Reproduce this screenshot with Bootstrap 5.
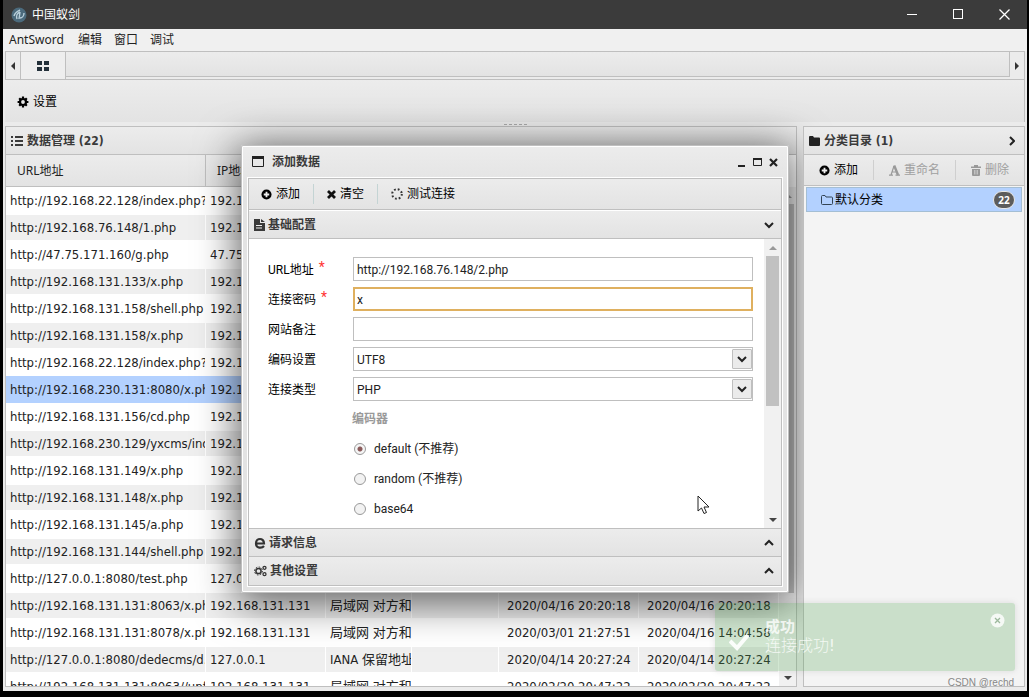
<!DOCTYPE html>
<html lang="zh-CN">
<head>
<meta charset="utf-8">
<meta name="viewport" content="width=device-width, initial-scale=1">
<title>中国蚁剑</title>
<link href="https://cdn.jsdelivr.net/npm/bootstrap@5.3.0/dist/css/bootstrap.min.css" rel="stylesheet">
<style>
:root{--line:#bfbfbf;--face:linear-gradient(#ececec,#e3e3e3)}
body{background:#000;font:12px/16px "DejaVu Sans Condensed","Noto Sans CJK SC",sans-serif;color:#000}
button,input,select{font:inherit;color:inherit}
button{background:none;border:0;padding:0}
svg{display:block;flex:none}
.app{height:calc(100vh - 6px);margin:0 2px 0 3px;background:#ebebeb}
.titlebar,.menubar,.tabs,.tools,.splitter{flex:none}
.titlebar{height:29px;background:#3b3b3b;color:#fff;padding:0 0 0 8px;gap:5px}
.wbtn{width:46px;height:27px;display:flex;align-items:center;justify-content:center}
.menubar{height:22px;background:#f0f0f0;padding:0 6px;gap:12px;font-family:"Noto Sans","Noto Sans CJK SC",sans-serif}
.menubar a{color:#222;text-decoration:none}
.menubar a:first-child{min-width:57px}
.frame{margin:0 2px 4px;min-height:0}
.tabs{height:29px;border:1px solid var(--line);background:#ebebeb}
.tabs .arrow{width:14px;display:flex;align-items:center;justify-content:center}
.tab-on{width:46px;border:solid var(--line);border-width:0 1px;display:flex;align-items:center;justify-content:center;background:#eee}
.strip{background:var(--face);border:solid var(--line);border-width:0 1px 1px 0;margin-bottom:2px}
.tools{height:42px;padding:1px 12px 0;background:var(--face);border-right:1px solid var(--line)}
.tools button,.iconbtn{display:inline-flex;align-items:center;gap:4px}
.splitter{height:4px;display:flex;justify-content:center;align-items:center}
.splitter span{width:23px;border-top:1px dashed #aaa}
.panes{gap:6px;min-height:0}
.pane{border:1px solid var(--line);display:flex;flex-direction:column;min-height:0;background:#f4f4f4}
.pane-right{width:222px;flex:none;z-index:3}
.pane-head{height:28px;flex:none;background:var(--face);border-bottom:1px solid var(--line);font-weight:700;color:#3a3a3a;padding:0 5px;gap:4px}
.pane-head h2,.dlg h2,.dlg h3{font-size:12px;line-height:16px;font-weight:700;margin:0}
.scrolly{min-height:0;overflow:hidden;background:#fff}
.list{width:100%;table-layout:fixed;border-collapse:separate;border-spacing:0;font-size:13px;line-height:18px;color:#222}
.list th{height:32px;background:var(--face);border:solid var(--line);border-width:0 1px 1px 0;font-weight:400;padding:0 11px;white-space:nowrap;overflow:hidden;font-size:12px;font-family:"Noto Sans","Noto Sans CJK SC",sans-serif}
.list td{height:27px;padding:0 0 0 4px;white-space:nowrap;overflow:hidden;border-right:1px solid #fff}
.list tbody tr:nth-child(even) td{background:linear-gradient(#fff 1px,#efefef 1px,#efefef 26px,#fff 26px)}
.list tbody tr.picked td{background:#b3d1ff;border-color:#b3d1ff}
.sbar{width:17px;flex:none;background:#f1f1f1;display:flex;flex-direction:column;align-items:center;justify-content:space-between}
.sbar i{height:17px;display:flex;align-items:center}
.sbar b{width:13px;background:#c1c1c1}
.list-bar{margin-top:32px}
.cat-tools{height:31px;flex:none;background:var(--face);border-bottom:1px solid var(--line);padding:0 7px 0 15px}
.cat-tools .iconbtn:disabled{color:#a0a0a0}
.vsep{width:1px;height:20px;background:#cfcfcf}
.cat-item{margin:1px 2px;height:25px;background:#b3d1ff;border:1px solid #a4bed4;padding:0 6px 0 14px;gap:2px;color:#000;text-decoration:none}
.count{width:22px;height:18px;border-radius:9px;background:#5c5c5c;border:1px solid #e8e8e8;color:#fff;font:700 10px/16px "Noto Sans",sans-serif;text-align:center}
.dlg{position:absolute;z-index:2;top:145px;left:241px;right:240px;border:1px solid var(--line);border-radius:2px;background:linear-gradient(#ececec,#e3e3e3 40px,#e3e3e3);box-shadow:inset 0 0 0 1px #fff,0 6px 40px 4px rgba(0,0,0,.6);padding:0 6px 6px}
.dlg-head{height:32px;padding:0 4px 0 4px;gap:7px;color:#3a3a3a}
.dlg-body{border:1px solid var(--line);outline:1px solid #fff}
.dlg-tools{height:31px;background:var(--face);padding:0 12px;border-bottom:1px solid var(--line)}
.dlg-tools .vsep{background:#c4d4d4;margin:0 13px}
.acc{height:28px;background:var(--face);padding:0 7px 0 5px;gap:3px;color:#3a3a3a;border-bottom:1px solid var(--line);width:100%}
.acc-last{border-bottom:0}
.acc-first{height:29px;border-top:1px solid #fff}
.formwrap{height:290px;overflow:hidden;border-bottom:1px solid var(--line);background:#fff}
.fields{padding:18px 11px 0 19px;font-family:Roboto,"Noto Sans CJK SC",sans-serif;font-size:12px}
.frow{display:grid;grid-template-columns:85px 1fr;align-items:center;height:24px;margin-bottom:6px}
.frow label{padding-top:2px}
.frow input,.frow select{width:100%;height:24px;border:1px solid var(--line);background:#fff;padding:1px 3px 0;outline:0;border-radius:0;appearance:none;color:#222}
.frow input.current{border:2px solid #dfb05f;padding:1px 2px 0}
.frow sup{color:#f33;font-size:14px;top:-2px;margin-left:2px}
.picker{position:relative}
.picker span{position:absolute;right:1px;top:2px;width:20px;height:20px;border:1px solid var(--line);border-radius:1px;background:#ebebeb;display:flex;align-items:center;justify-content:center;pointer-events:none}
.enc{margin:0 0 0 84px;padding:0}
.enc legend{float:none;font-size:12px;line-height:24px;height:24px;margin:3px 0 6px;padding:0;font-weight:700;color:#999}
.enc label{display:flex;align-items:center;height:24px;margin-bottom:6px;gap:8px;color:#222}
.enc input{appearance:none;width:12px;height:12px;border:1px solid #999;border-radius:50%;background:#f2f2f2;margin:0 0 0 2px}
.enc input:checked{background:radial-gradient(circle,#8a5a5a 2px,#f5f5f5 3px)}
.toastbox{position:absolute;z-index:4;right:14px;bottom:26px;width:300px;height:68px;border-radius:3px;background:rgba(81,163,81,.26);color:rgba(255,255,255,.8);padding:14px 10px 0 14px;gap:16px;box-shadow:0 0 6px rgba(120,120,120,.2)}
.toastbox > button{margin-top:-4px}
.toastbox strong{display:block;font-size:15px;line-height:20px}
.toastbox p{margin:0;font-size:16px;line-height:18px;font-weight:300}
.mark-csdn{position:absolute;z-index:5;right:15px;bottom:7px;font:10px/14px "Liberation Sans",sans-serif;color:#888}
.pointer{position:absolute;z-index:5;left:697px;top:495px}
</style>
</head>
<body class="overflow-hidden position-relative vh-100">
<svg width="0" height="0" class="position-absolute">
<defs>
<symbol id="plus" viewBox="0 0 12 12"><circle cx="6" cy="6" r="5.5"/><path d="M6 3v6M3 6h6" stroke="#eee" stroke-width="2"/></symbol>
<symbol id="down" viewBox="0 0 10 8"><path d="M1 2l4 4 4-4" fill="none" stroke="#222" stroke-width="2"/></symbol>
<symbol id="up" viewBox="0 0 10 8"><path d="M1 6l4-4 4 4" fill="none" stroke="#222" stroke-width="2"/></symbol>
<symbol id="gear" viewBox="0 0 12 12"><circle cx="6" cy="6" r="3" fill="none" stroke="currentColor" stroke-width="2.2"/><path d="M6 .6v2M6 9.400v2M.6 6h2M9.400 6h2M2.200 2.200l1.500 1.500M8.300 8.300l1.500 1.500M9.800 2.200L8.300 3.700M3.700 8.300L2.200 9.800" stroke="currentColor" stroke-width="2.200"/></symbol>
</defs>
</svg>
<div class="app d-flex flex-column">
  <header class="titlebar d-flex align-items-center">
    <svg width="16" height="16" viewBox="0 0 16 16"><circle cx="8" cy="8" r="7.500" fill="#4b6a7c"/><path d="M3 9c1-4 4-5 6-6M6 12c-1-3 0-6 3-7M9 11c2 0 4-2 4-5M9 5l-1 7" fill="none" stroke="#b9d0dc" stroke-width="1.400"/></svg>
    <span class="me-auto">中国蚁剑</span>
    <div class="d-flex">
      <button class="wbtn" aria-label="最小化"><svg width="11" height="11"><path d="M0 5.500h10" stroke="#fff"/></svg></button>
      <button class="wbtn" aria-label="最大化"><svg width="11" height="11"><rect x=".5" y=".5" width="9" height="9" fill="none" stroke="#fff"/></svg></button>
      <button class="wbtn" aria-label="关闭"><svg width="11" height="11"><path d="M.5 .5l10 10M10.500 .5l-10 10" stroke="#fff" stroke-width="1.300"/></svg></button>
    </div>
  </header>
  <nav class="menubar d-flex align-items-center"><a href="#">AntSword</a><a href="#">编辑</a><a href="#">窗口</a><a href="#">调试</a></nav>
  <main class="frame d-flex flex-column flex-grow-1">
    <div class="tabs d-flex">
      <button class="arrow" aria-label="向左"><svg width="4" height="8"><path d="M4 0v8L0 4z" fill="#333"/></svg></button>
      <button class="tab-on" aria-label="首页"><svg width="12" height="10" fill="#23303a"><path d="M0 0h5v4H0zM7 0h5v4H7zM0 6h5v4H0zM7 6h5v4H7z"/></svg></button>
      <div class="strip flex-grow-1"></div>
      <button class="arrow" aria-label="向右"><svg width="4" height="8"><path d="M0 0v8l4-4z" fill="#333"/></svg></button>
    </div>
    <div class="tools d-flex align-items-center"><button><svg width="12" height="12"><use href="#gear"/></svg>设置</button></div>
    <div class="splitter"><span></span></div>
    <div class="panes d-flex flex-grow-1">
      <section class="pane flex-grow-1">
        <div class="pane-head d-flex align-items-center">
          <svg width="12" height="10" fill="#3a3a3a"><path d="M0 0h2v2H0zM4 0h8v2H4zM0 4h2v2H0zM4 4h8v2H4zM0 8h2v2H0zM4 8h8v2H4z"/></svg>
          <h2>数据管理 (22)</h2>
        </div>
        <div class="scrolly flex-grow-1 d-flex">
          <div class="flex-grow-1">
          <table class="list">
            <colgroup><col style="width:200px"><col style="width:120px"><col style="width:86px"><col style="width:87px"><col style="width:140px"><col></colgroup>
            <thead><tr><th>URL地址</th><th>IP地址</th><th></th><th></th><th></th><th></th></tr></thead>
            <tbody>
              <tr><td>http://192.168.22.128/index.php?</td><td>192.168.22.128</td><td></td><td></td><td></td><td></td></tr>
              <tr><td>http://192.168.76.148/1.php</td><td>192.168.76.148</td><td></td><td></td><td></td><td></td></tr>
              <tr><td>http://47.75.171.160/g.php</td><td>47.75.171.160</td><td></td><td></td><td></td><td></td></tr>
              <tr><td>http://192.168.131.133/x.php</td><td>192.168.131.133</td><td></td><td></td><td></td><td></td></tr>
              <tr><td>http://192.168.131.158/shell.php</td><td>192.168.131.158</td><td></td><td></td><td></td><td></td></tr>
              <tr><td>http://192.168.131.158/x.php</td><td>192.168.131.158</td><td></td><td></td><td></td><td></td></tr>
              <tr><td>http://192.168.22.128/index.php?</td><td>192.168.22.128</td><td></td><td></td><td></td><td></td></tr>
              <tr class="picked"><td>http://192.168.230.131:8080/x.php</td><td>192.168.230.131</td><td></td><td></td><td></td><td></td></tr>
              <tr><td>http://192.168.131.156/cd.php</td><td>192.168.131.156</td><td></td><td></td><td></td><td></td></tr>
              <tr><td>http://192.168.230.129/yxcms/index.php</td><td>192.168.230.129</td><td></td><td></td><td></td><td></td></tr>
              <tr><td>http://192.168.131.149/x.php</td><td>192.168.131.149</td><td></td><td></td><td></td><td></td></tr>
              <tr><td>http://192.168.131.148/x.php</td><td>192.168.131.148</td><td></td><td></td><td></td><td></td></tr>
              <tr><td>http://192.168.131.145/a.php</td><td>192.168.131.145</td><td></td><td></td><td></td><td></td></tr>
              <tr><td>http://192.168.131.144/shell.php</td><td>192.168.131.144</td><td></td><td></td><td></td><td></td></tr>
              <tr><td>http://127.0.0.1:8080/test.php</td><td>127.0.0.1</td><td></td><td></td><td></td><td></td></tr>
              <tr><td>http://192.168.131.131:8063/x.php</td><td>192.168.131.131</td><td>局域网 对方和</td><td></td><td class="ps-2">2020/04/16 20:20:18</td><td class="ps-2">2020/04/16 20:20:18</td></tr>
              <tr><td>http://192.168.131.131:8078/x.php</td><td>192.168.131.131</td><td>局域网 对方和</td><td></td><td class="ps-2">2020/03/01 21:27:51</td><td class="ps-2">2020/04/16 14:04:58</td></tr>
              <tr><td>http://127.0.0.1:8080/dedecms/d.php</td><td>127.0.0.1</td><td>IANA 保留地址</td><td></td><td class="ps-2">2020/04/14 20:27:24</td><td class="ps-2">2020/04/14 20:27:24</td></tr>
              <tr><td>http://192.168.131.131:8063//upfile.php</td><td>192.168.131.131</td><td>局域网 对方和</td><td></td><td class="ps-2">2020/02/20 20:47:22</td><td class="ps-2">2020/02/20 20:47:22</td></tr>
            </tbody>
          </table>
          </div>
          <div class="sbar list-bar"><i><svg width="8" height="4"><path d="M0 4h8L4 0z" fill="#999"/></svg></i><b class="mb-auto" style="height:78%"></b><i><svg width="8" height="4"><path d="M0 0h8L4 4z" fill="#444"/></svg></i></div>
        </div>
      </section>
      <section class="pane pane-right">
        <div class="pane-head d-flex align-items-center">
          <svg width="11" height="10" fill="#222"><path d="M0 1q0-1 1-1h3l1 1.500h5q1 0 1 1V9q0 1-1 1H1q-1 0-1-1z"/></svg>
          <h2 class="me-auto">分类目录 (1)</h2>
          <button aria-label="展开" class="pe-1"><svg width="6" height="10"><path d="M1 1l4 4-4 4" fill="none" stroke="#222" stroke-width="2"/></svg></button>
        </div>
        <div class="cat-tools d-flex align-items-center justify-content-between">
          <button class="iconbtn"><svg width="11" height="11"><use href="#plus"/></svg>添加</button><span class="vsep"></span>
          <button class="iconbtn" disabled><svg width="11" height="11" viewBox="0 0 11 11"><path d="M5 1L2 10M3.500 7h4M0 10.200h4M6.500 10.200H11" fill="none" stroke="#999" stroke-width="1.200"/><path d="M5.200 .5L9 10" stroke="#999" stroke-width="2.400"/></svg>重命名</button><span class="vsep"></span>
          <button class="iconbtn pe-2" disabled><svg width="10" height="11" viewBox="0 0 10 11" fill="#999"><path d="M0 1.500h3V0h4v1.500h3V3H0zM1 4h8v6q0 1-1 1H2q-1 0-1-1z"/><path d="M3.500 5v4.500M5 5v4.500M6.500 5v4.500" stroke="#ddd" stroke-width=".6"/></svg>删除</button>
        </div>
        <a href="#" class="cat-item d-flex align-items-center"><svg width="12" height="10" viewBox="0 0 12 10"><path d="M.5 1.500q0-1 1-1h2.500l1 1.500h5.500q1 0 1 1v5.500q0 1-1 1h-9q-1 0-1-1z" fill="none" stroke="#345"/></svg><span class="me-auto">默认分类</span><span class="count">22</span></a>
      </section>
    </div>
  </main>
</div>

<section class="dlg" role="dialog" aria-labelledby="dlgTitle">
  <div class="dlg-head d-flex align-items-center">
    <svg width="13" height="12"><path d="M.5 .5h11v10H.5z" fill="none" stroke="#222"/><path d="M0 0h12v3H0z" fill="#222"/></svg>
    <h2 id="dlgTitle" class="me-auto">添加数据</h2>
    <button aria-label="最小化"><svg width="8" height="10"><path d="M0 9h7" stroke="#222" stroke-width="2"/></svg></button>
    <button aria-label="最大化"><svg width="9" height="8"><path d="M.5 .5h8v7h-8z" fill="none" stroke="#222"/><path d="M0 1h9" stroke="#222" stroke-width="2"/></svg></button>
    <button aria-label="关闭"><svg width="9" height="9"><path d="M1 1l7 7M8 1L1 8" stroke="#222" stroke-width="2.200"/></svg></button>
  </div>
  <div class="dlg-body">
    <div class="dlg-tools d-flex align-items-center">
      <button class="iconbtn"><svg width="11" height="11"><use href="#plus"/></svg>添加</button><span class="vsep"></span>
      <button class="iconbtn"><svg width="9" height="9"><path d="M1 1l7 7M8 1L1 8" stroke="#111" stroke-width="2.800"/></svg>清空</button><span class="vsep"></span>
      <button class="iconbtn"><svg width="12" height="12" viewBox="0 0 12 12"><circle cx="6" cy="6" r="4.800" fill="none" stroke="#333" stroke-width="2" stroke-dasharray="1.800 2"/></svg>测试连接</button>
    </div>
    <button class="acc acc-first d-flex align-items-center"><svg width="11" height="12"><path d="M0 0h6v4h5v8H0zM7 0l4 3H7z" fill="#3a3a3a"/><path d="M2 6.500h6M2 9h6" stroke="#eee"/></svg><h3 class="me-auto">基础配置</h3><svg width="10" height="8"><use href="#down"/></svg></button>
    <div class="formwrap d-flex">
      <form class="fields flex-grow-1">
        <div class="frow"><label for="fUrl">URL地址 <sup>*</sup></label><input id="fUrl" value="http://192.168.76.148/2.php"></div>
        <div class="frow"><label for="fPwd">连接密码 <sup>*</sup></label><input id="fPwd" class="current" value="x"></div>
        <div class="frow"><label for="fNote">网站备注</label><input id="fNote"></div>
        <div class="frow"><label for="fEnc">编码设置</label><div class="picker"><select id="fEnc"><option>UTF8</option></select><span><svg width="10" height="8"><use href="#down"/></svg></span></div></div>
        <div class="frow"><label for="fType">连接类型</label><div class="picker"><select id="fType"><option>PHP</option></select><span><svg width="10" height="8"><use href="#down"/></svg></span></div></div>
        <fieldset class="enc"><legend>编码器</legend>
          <label><input type="radio" name="enc" checked>default (不推荐)</label>
          <label><input type="radio" name="enc">random (不推荐)</label>
          <label><input type="radio" name="enc">base64</label>
        </fieldset>
      </form>
      <div class="sbar"><i><svg width="8" height="4"><path d="M0 4h8L4 0z" fill="#999"/></svg></i><b class="mb-auto" style="height:52%"></b><i><svg width="8" height="4"><path d="M0 0h8L4 4z" fill="#444"/></svg></i></div>
    </div>
    <button class="acc d-flex align-items-center"><svg width="12" height="12"><path d="M1.500 6.500h8.500c0-6-8-6-8 0 0 5 6 5 8 2.500" fill="none" stroke="#333" stroke-width="2.200"/></svg><h3 class="me-auto">请求信息</h3><svg width="10" height="8"><use href="#up"/></svg></button>
    <button class="acc acc-last d-flex align-items-center"><svg width="13" height="12" viewBox="0 0 13 12" fill="none" stroke="#333"><circle cx="4.500" cy="6" r="2.600" stroke-width="1.500"/><circle cx="4.500" cy="6" r="4" stroke-dasharray="1.600 1.500"/><circle cx="10.500" cy="2.800" r="1.500" stroke-width="1.300"/><circle cx="10.500" cy="9.200" r="1.500" stroke-width="1.300"/></svg><h3 class="me-auto">其他设置</h3><svg width="10" height="8"><use href="#up"/></svg></button>
  </div>
</section>

<div class="toastbox d-flex" role="status">
  <svg width="20" height="18" class="mt-3"><path d="M1 8l7 7L19 2" fill="none" stroke="#fff" stroke-width="4" opacity=".9"/></svg>
  <div class="me-auto"><strong>成功</strong><p>连接成功!</p></div>
  <button aria-label="关闭提示" class="align-self-start"><svg width="15" height="15"><circle cx="7.500" cy="7.500" r="7" fill="#fff" opacity=".8"/><path d="M5 5l5 5M10 5l-5 5" stroke="#9cb89c" stroke-width="1.300"/></svg></button>
</div>
<svg class="pointer" width="13" height="20" viewBox="0 0 13 20"><path d="M1 1v15l3.500-3 2.500 5.500 2.500-1L7 12h5z" fill="#fff" stroke="#222"/></svg>
<div class="mark-csdn">CSDN @rechd</div>
<script src="https://cdn.jsdelivr.net/npm/bootstrap@5.3.0/dist/js/bootstrap.bundle.min.js"></script>
</body>
</html>
